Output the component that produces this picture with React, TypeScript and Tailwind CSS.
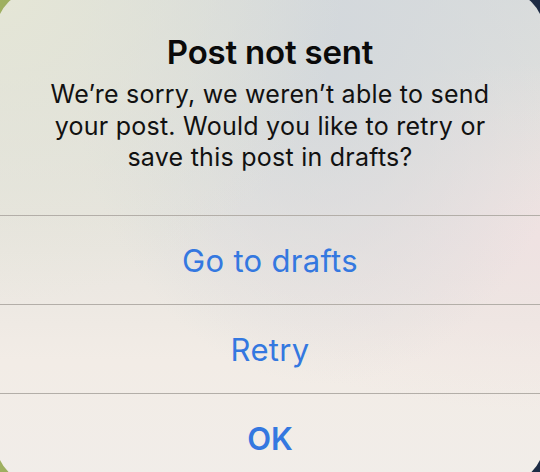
export default function App() {
  return (
    <div className="w-[540px] h-[472px] overflow-hidden bg-[linear-gradient(90deg,#9fb060_0%,#7c8a70_40%,#1c2a44_100%)]">
      <div
        className="mt-[-10px] ml-[-4px] w-[548px] h-[494px] rounded-[42px] overflow-hidden flex flex-col bg-[radial-gradient(ellipse_at_0%_0%,#e5e6d6_0%,transparent_45%),radial-gradient(ellipse_at_60%_10%,#d3d8dc_0%,transparent_55%),radial-gradient(ellipse_at_100%_50%,#efe2e2_0%,transparent_50%),linear-gradient(180deg,#d9dcdc_0%,#e6e4de_45%,#f2ece6_75%,#f1ede9_100%)]"
        style={{ fontFamily: "Inter, 'Noto Sans', sans-serif" }}
      >
        <div className="h-[226px] flex flex-col items-center pt-[42px] border-b border-[#b3aea8]">
          <div className="text-[33px] leading-[40px] font-semibold text-[#0a0a0a] tracking-[-0.2px]">
            Post not sent
          </div>
          <div className="mt-[7px] text-[25px] leading-[31.5px] tracking-[0.25px] text-[#111] text-center">
            We’re sorry, we weren’t able to send
            <br />
            your post. Would you like to retry or
            <br />
            save this post in drafts?
          </div>
        </div>
        <div className="h-[89px] pt-[2px] flex items-center justify-center border-b border-[#b3aea8] text-[31px] tracking-[0.3px] text-[#3478e0]">
          Go to drafts
        </div>
        <div className="h-[89px] pt-[2px] flex items-center justify-center border-b border-[#b3aea8] text-[31px] tracking-[0.3px] text-[#3478e0]">
          Retry
        </div>
        <div className="h-[89px] pt-[2px] flex items-center justify-center text-[31px] font-semibold text-[#3478e0]">
          OK
        </div>
      </div>
    </div>
  );
}
